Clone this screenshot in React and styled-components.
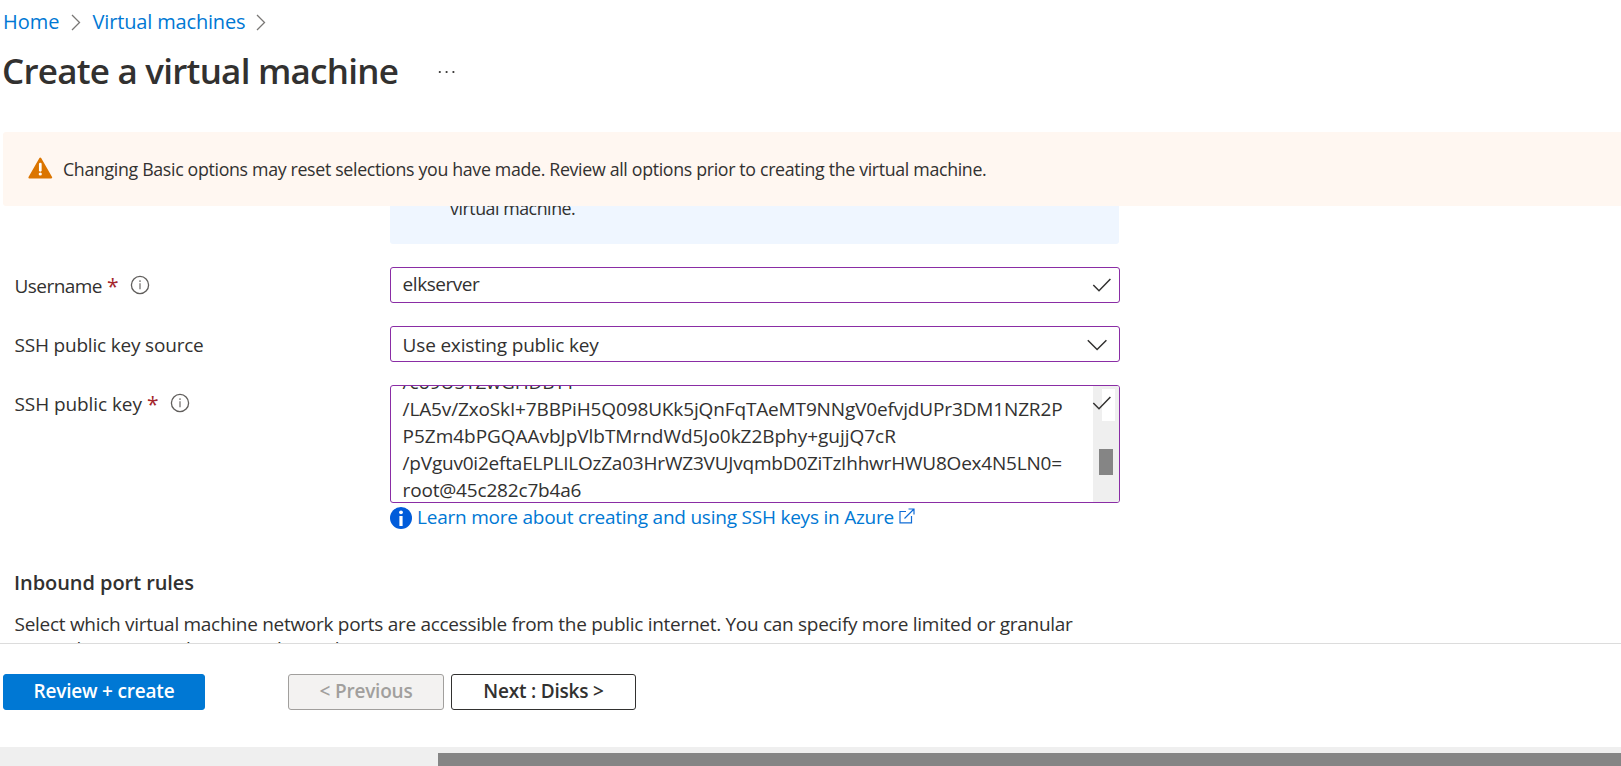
import React from 'react';
import styled, { createGlobalStyle, css } from 'styled-components';

const GlobalStyle = createGlobalStyle`
  * { box-sizing: border-box; }
  body {
    margin: 0;
    background: #fff;
    color: #323130;
    font-family: "Open Sans", "Noto Sans", sans-serif;
    font-size: 19px;
    overflow: hidden;
  }
`;

const Page = styled.main`
  display: flex;
  flex-direction: column;
  width: 1621px;
  height: 766px;
  overflow: hidden;
`;

const Text = styled.span`
  white-space: pre;
  letter-spacing: ${(p) => p.$track || 0}px;
`;

const Breadcrumb = styled.nav`
  display: flex;
  align-items: center;
  height: 36px;
  padding: 8px 0 0 3px;
`;

const Crumb = styled.a`
  color: #0078d4;
  font-size: 20px;
  line-height: 28px;
  letter-spacing: ${(p) => p.$track || 0}px;
`;

const CrumbChevron = styled.svg`
  width: 10px;
  height: 17px;
  margin: 0 12px 0 11px;
  fill: none;
  stroke: #797775;
  stroke-width: 1.3;
`;

const TitleBar = styled.header`
  display: flex;
  align-items: center;
  height: 48px;
  margin: 10px 0 38px 2px;
`;

const Title = styled.h1`
  width: 436px;
  margin: 0;
  padding-top: 2px;
  font-size: 35px;
  line-height: 48px;
  font-weight: 600;
  letter-spacing: -0.77px;
  white-space: nowrap;
`;

const MoreDots = styled.svg`
  width: 18px;
  height: 4px;
  margin-top: 4px;
  fill: #323130;
`;

const WarningBanner = styled.div`
  display: flex;
  flex: none;
  align-items: center;
  height: 74px;
  margin-left: 3px;
  padding-left: 25px;
  border-radius: 3px 0 0 3px;
  background: #fff7f1;
  font-size: 17.8px;
`;

const WarningIcon = styled.svg`
  width: 25px;
  height: 22px;
  margin: 0 10px 2px 0;
`;

const FormArea = styled.section`
  display: flex;
  flex-direction: column;
  height: 437px;
  overflow: hidden;
`;

const InfoBox = styled.div`
  flex: none;
  width: 729px;
  height: 38px;
  margin: 0 0 23px 390px;
  padding-left: 60px;
  border-radius: 0 0 3px 3px;
  background: #eff6ff;
  font-size: 17.8px;
  line-height: 24px;
`;

const InfoLine = styled.p`
  margin: 0;
  transform: translateY(-10px);
`;

const FieldRow = styled.div`
  display: grid;
  flex: none;
  grid-template-columns: 375.5px 730px;
  padding-left: 14.5px;
  margin-bottom: ${(p) => (p.$last ? 0 : 23)}px;
`;

const Label = styled.label`
  display: flex;
  align-items: center;
  height: 36px;
  padding-top: 1px;
`;

const Required = styled.span`
  width: 12px;
  margin: 0 11px 0 5px;
  color: #a4262c;
  font-size: 21px;
  font-weight: 500;
  line-height: 26px;
`;

const InfoOutline = styled.svg`
  width: 20px;
  height: 20px;
  margin-bottom: 1px;
`;

const fieldFrame = css`
  border: 1px solid #8a2da5;
  border-radius: 3px;
  background: #fff;
`;

const Field = styled.div`
  ${fieldFrame}
  display: flex;
  align-items: center;
  justify-content: space-between;
  height: 36px;
  padding-left: 11.6px;
  padding-right: ${(p) => (p.$select ? 12 : 7)}px;
`;

const FieldValue = styled(Text)`
  line-height: 26px;
  margin-bottom: ${(p) => p.$lift || 0}px;
`;

const Glyph = styled.svg`
  width: 20px;
  height: 14px;
  margin-top: ${(p) => p.$drop || 0}px;
  fill: none;
  stroke: #323130;
  stroke-width: 1.5;
`;

const KeyBox = styled.div`
  ${fieldFrame}
  display: flex;
  justify-content: space-between;
  height: 118px;
  overflow: hidden;
`;

const KeyLines = styled.div`
  display: flex;
  flex-direction: column;
  height: 135px;
  margin: -17px 0 0 11.6px;
  line-height: 27px;
`;

const KeyScroll = styled.div`
  position: relative;
  width: 26px;
  height: 116px;
  padding: 63px 6px 0;
  background: #efefef;
`;

const KeyThumb = styled.div`
  height: 26px;
  background: #858585;
`;

const ValidMark = styled.div`
  position: absolute;
  top: 3px;
  left: 9px;
  width: 13px;
  height: 32px;
  background: #fff;
`;

const ValidGlyph = styled(Glyph)`
  position: absolute;
  top: 7px;
  left: -10px;
`;

const LearnMore = styled.div`
  display: flex;
  flex: none;
  align-items: center;
  height: 27px;
  margin-left: 390px;
  color: #0078d4;
`;

const InfoSolid = styled.svg`
  width: 22px;
  height: 22px;
  margin: 3px 5px 0 0;
`;

const ExternalIcon = styled.svg`
  width: 16px;
  height: 16px;
  margin: 0 0 1px 5px;
  fill: none;
  stroke: #0f6cd6;
  stroke-width: 1.2;
`;

const SectionTitle = styled.h2`
  margin: 39px 0 0 14px;
  font-size: 20px;
  line-height: 28px;
  font-weight: 600;
  letter-spacing: -0.06px;
`;

const Description = styled.p`
  display: flex;
  flex-direction: column;
  margin: 14px 0 0 14.6px;
  line-height: 27px;
`;

const SecondLine = styled(Text)`
  margin-top: -2px;
`;

const Footer = styled.footer`
  display: flex;
  flex: none;
  height: 104px;
  padding: 30px 0 0 3px;
  border-top: 1px solid #dcdcdc;
`;

const tones = {
  primary: css`background: #0078d4; border-color: #0078d4; color: #fff;`,
  disabled: css`background: #f3f2f1; border-color: #a19f9d; color: #a19f9d;`,
  plain: css`background: #fff; border-color: #323130; color: #323130;`,
};

const Button = styled.button`
  width: ${(p) => p.$width}px;
  height: 36px;
  margin: 0 ${(p) => p.$gap || 0}px 0 0;
  padding: 0 0 2px;
  border: 1px solid;
  border-radius: 3px;
  font: 600 19px/26px "Open Sans", "Noto Sans", sans-serif;
  letter-spacing: -0.2px;
  white-space: nowrap;
  ${(p) => tones[p.$tone]}
`;

const PageScroll = styled.div`
  flex: none;
  height: 19px;
  padding: 6px 0 0 438px;
  background: #efefef;
`;

const PageThumb = styled.div`
  height: 13px;
  background: #858585;
`;

const keyLines = [
  ['/co9U5YZwGHDBYY', -0.1],
  ['/LA5v/ZxoSkI+7BBPiH5Q098UKk5jQnFqTAeMT9NNgV0efvjdUPr3DM1NZR2P', -0.14],
  ['P5Zm4bPGQAAvbJpVlbTMrndWd5Jo0kZ2Bphy+gujjQ7cR', -0.03],
  ['/pVguv0i2eftaELPLILOzZa03HrWZ3VUJvqmbD0ZiTzIhhwrHWU8Oex4N5LN0=', -0.21],
  ['root@45c282c7b4a6', -0.18],
];

const Chevron = () => (
  <CrumbChevron viewBox="0 0 10 17"><path d="M1 1l7.5 7.5L1 16" /></CrumbChevron>
);

const InfoHint = () => (
  <InfoOutline viewBox="0 0 20 20">
    <circle cx="10" cy="10" r="8.6" fill="none" stroke="#605e5c" strokeWidth="1.3" />
    <path d="M10 8.3v6M10 5.2v1.7" stroke="#8a8886" strokeWidth="1.5" />
  </InfoOutline>
);

const checkPath = <path d="M1.3 7l5.7 5.7L18.4 1" />;

export default function App() {
  return (
    <Page>
      <GlobalStyle />
      <Breadcrumb>
        <Crumb>Home</Crumb>
        <Chevron />
        <Crumb $track={-0.16}>Virtual machines</Crumb>
        <Chevron />
      </Breadcrumb>
      <TitleBar>
        <Title>Create a virtual machine</Title>
        <MoreDots viewBox="0 0 18 4">
          <circle cx="1.8" cy="2" r="1.1" />
          <circle cx="8.6" cy="2" r="1.1" />
          <circle cx="15.4" cy="2" r="1.1" />
        </MoreDots>
      </TitleBar>
      <WarningBanner>
        <WarningIcon viewBox="0 0 25 22">
          <path d="M12.3 1.5L23.2 20.5H1.4z" fill="#db7500" stroke="#db7500" strokeWidth="2" strokeLinejoin="round" />
          <path d="M12.3 7v6.3" stroke="#fff" strokeWidth="2.7" strokeLinecap="round" />
          <circle cx="12.3" cy="17" r="1.6" fill="#fff" />
        </WarningIcon>
        <Text $track={-0.337}>Changing Basic options may reset selections you have made. Review all options prior to creating the virtual machine.</Text>
      </WarningBanner>
      <FormArea>
        <InfoBox>
          <InfoLine><Text $track={-0.46}>virtual machine.</Text></InfoLine>
        </InfoBox>
        <FieldRow>
          <Label>
            <Text $track={-0.55}>Username</Text>
            <Required>*</Required>
            <InfoHint />
          </Label>
          <Field>
            <FieldValue $track={-0.45} $lift={3}>elkserver</FieldValue>
            <Glyph viewBox="0 0 20 14" $drop={-1}>{checkPath}</Glyph>
          </Field>
        </FieldRow>
        <FieldRow>
          <Label><Text $track={-0.19}>SSH public key source</Text></Label>
          <Field $select>
            <FieldValue $track={-0.18} $lift={-1}>Use existing public key</FieldValue>
            <Glyph viewBox="0 0 20 14" $drop={1}><path d="M.8 2.2l9.3 9.3 9.3-9.3" /></Glyph>
          </Field>
        </FieldRow>
        <FieldRow $last>
          <Label>
            <Text $track={-0.08}>SSH public key</Text>
            <Required>*</Required>
            <InfoHint />
          </Label>
          <KeyBox>
            <KeyLines>
              {keyLines.map(([line, track]) => <Text key={line} $track={track}>{line}</Text>)}
            </KeyLines>
            <KeyScroll>
              <ValidMark>
                <ValidGlyph viewBox="0 0 20 14">{checkPath}</ValidGlyph>
              </ValidMark>
              <KeyThumb />
            </KeyScroll>
          </KeyBox>
        </FieldRow>
        <LearnMore>
          <InfoSolid viewBox="0 0 22 22">
            <circle cx="11" cy="11" r="11" fill="#015cda" />
            <circle cx="11" cy="5.3" r="1.9" fill="#fff" />
            <path d="M11 9v10" stroke="#fff" strokeWidth="3.2" />
          </InfoSolid>
          <Text $track={-0.225}>Learn more about creating and using SSH keys in Azure</Text>
          <ExternalIcon viewBox="0 0 16 16">
            <path d="M7 3.5H1v11.3h11.5V8M5.5 10.5L15 1M9.5 1H15v5.5" />
          </ExternalIcon>
        </LearnMore>
        <SectionTitle>Inbound port rules</SectionTitle>
        <Description>
          <Text $track={-0.288}>Select which virtual machine network ports are accessible from the public internet. You can specify more limited or granular</Text>
          <SecondLine $track={-0.2}>network access on the Networking tab.</SecondLine>
        </Description>
      </FormArea>
      <Footer>
        <Button $tone="primary" $width={202} $gap={83}>Review + create</Button>
        <Button $tone="disabled" $width={156} $gap={7} disabled>&lt; Previous</Button>
        <Button $tone="plain" $width={185}>Next : Disks &gt;</Button>
      </Footer>
      <PageScroll><PageThumb /></PageScroll>
    </Page>
  );
}
